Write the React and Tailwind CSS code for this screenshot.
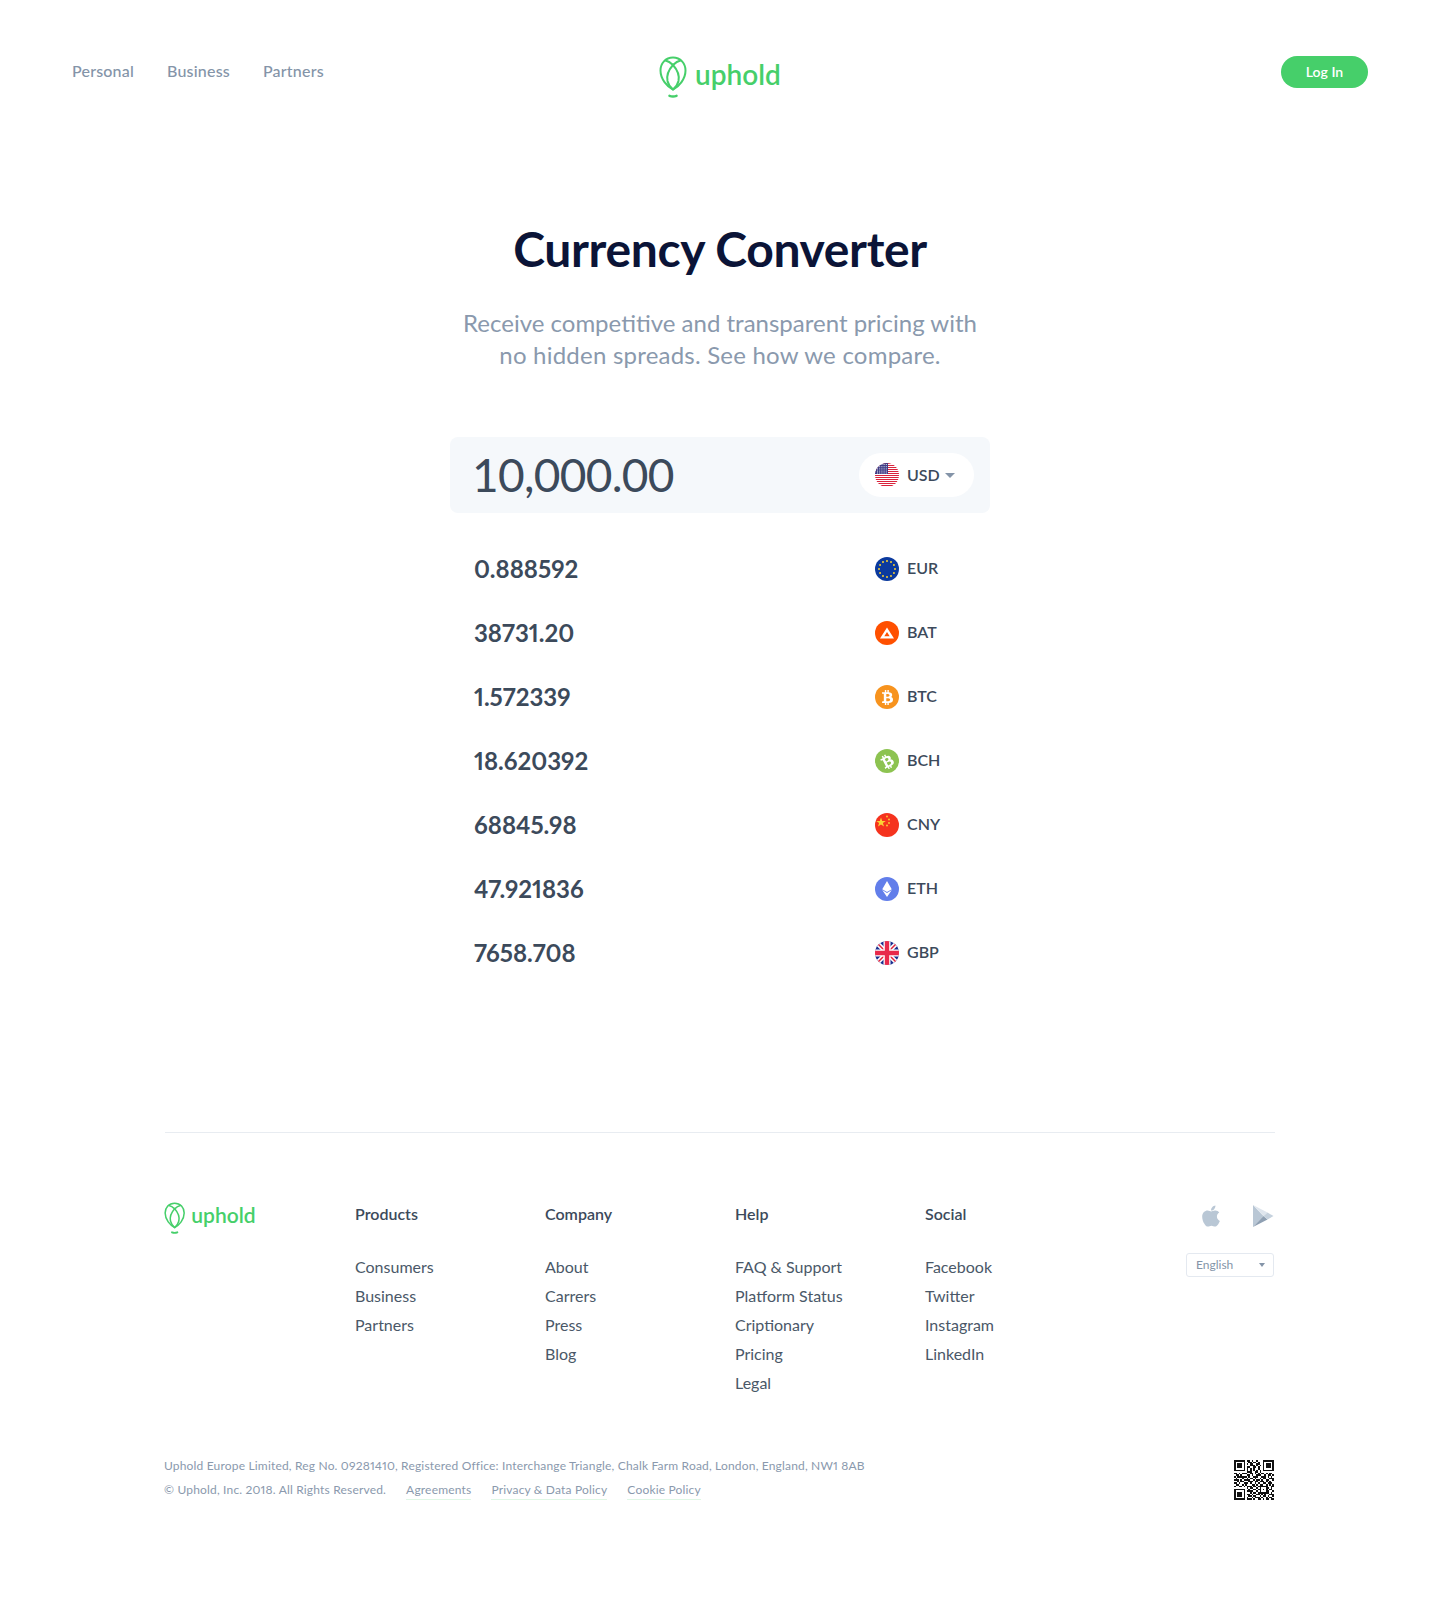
import React from "react";
import { FaApple, FaBtc, FaEthereum } from "react-icons/fa";

const Logo = ({ h, textClass }) => (
  <div className="flex items-center">
    <svg viewBox="0 0 28 42" style={{ height: h, width: (h * 28) / 42 }} fill="none" stroke="#46cf6a" strokeWidth="2" strokeLinecap="round">
      <path d="M14 1.5C6.5 1.5 1.5 7.5 1.5 14.5C1.5 23 8 30.5 14 33.5C20 30.5 26.5 23 26.5 14.5C26.5 7.5 21.5 1.5 14 1.5Z" />
      <path d="M14 9C9.5 14 7.5 20 8.5 25C9.5 29 12 32 14 33.5C16 32 18.5 29 19.5 25C20.5 20 18.5 14 14 9Z" />
      <path d="M6.5 4.5C9 5 12 7 14 9C16 7 19 5 21.5 4.5" />
      <path d="M10.5 39.8C12.5 40.6 15.5 40.6 17.5 39.8" strokeWidth="2.4" />
    </svg>
    <span className={"font-semibold text-[#46cf6a] " + textClass}>uphold</span>
  </div>
);

const Disc = ({ id, children }) => (
  <svg viewBox="0 0 24 24" className="w-6 h-6 shrink-0">
    <defs>
      <clipPath id={id}>
        <circle cx="12" cy="12" r="12" />
      </clipPath>
    </defs>
    <g clipPath={`url(#${id})`}>{children}</g>
  </svg>
);

const Us = () => (
  <Disc id="us">
    <rect width="24" height="24" fill="#fff" />
    {[0, 2, 4, 6, 8, 10, 12, 14, 16, 18, 20, 22].map((y) => (
      <rect key={y} y={y} width="24" height="1" shapeRendering="crispEdges" fill="#d9233c" />
    ))}
    <rect width="12.5" height="11" shapeRendering="crispEdges" fill="#3f3d86" />
    {[1.5, 3.7, 5.9, 8.1, 10].map((y, r) =>
      [2.5, 4.7, 6.9, 9.1, 11.3].map((x) => <rect key={x + "-" + r} x={x - 0.5} y={y - 0.5} width="1" height="1" fill="#e8e8f2" />)
    )}
  </Disc>
);

const Eur = () => (
  <Disc id="eur">
    <rect width="24" height="24" fill="#0b3a9e" />
    {Array.from({ length: 12 }).map((_, i) => {
      const a = (i * Math.PI) / 6;
      return <circle key={i} cx={12 + 8 * Math.cos(a)} cy={12 + 8 * Math.sin(a)} r="1" fill="#f6cf2f" />;
    })}
  </Disc>
);

const Bat = () => (
  <Disc id="bat">
    <rect width="24" height="24" fill="#ff5000" />
    <path fillRule="evenodd" d="M12 6.5L19 17.5H5L12 6.5ZM12 11L9.3 15.2H14.7L12 11Z" fill="#fff" />
  </Disc>
);

const Btc = () => (
  <div className="w-6 h-6 rounded-full bg-[#f7931e] flex items-center justify-center shrink-0">
    <FaBtc className="text-white w-[15px] h-[15px]" />
  </div>
);

const Bch = () => (
  <div className="w-6 h-6 rounded-full bg-[#8dc351] flex items-center justify-center shrink-0">
    <FaBtc className="text-white w-[15px] h-[15px] -rotate-[28deg]" />
  </div>
);

const Cny = () => (
  <Disc id="cny">
    <rect width="24" height="24" fill="#f5331e" />
    <path d="M6 4.5L7.2 8H10.8L7.9 10.1L9 13.6L6 11.5L3 13.6L4.1 10.1L1.2 8H4.8Z" fill="#fbd335" />
    {[[12, 3.5], [14, 6.5], [14, 10], [12, 12.5]].map(([x, y]) => (
      <circle key={y} cx={x} cy={y} r="0.9" fill="#fbd335" />
    ))}
  </Disc>
);

const Eth = () => (
  <div className="w-6 h-6 rounded-full bg-[#627eea] flex items-center justify-center shrink-0">
    <FaEthereum className="text-white w-[16px] h-[16px]" />
  </div>
);

const Gbp = () => (
  <Disc id="gbp">
    <rect width="24" height="24" fill="#1b2f8f" />
    <path d="M0 0L24 24M24 0L0 24" stroke="#fff" strokeWidth="4.5" />
    <path d="M0 0L24 24M24 0L0 24" stroke="#e0243c" strokeWidth="1.5" />
    <path d="M12 0V24M0 12H24" stroke="#fff" strokeWidth="7" />
    <path d="M12 0V24M0 12H24" stroke="#e8294a" strokeWidth="4.4" />
  </Disc>
);

const rates = [
  ["0.888592", "EUR", Eur],
  ["38731.20", "BAT", Bat],
  ["1.572339", "BTC", Btc],
  ["18.620392", "BCH", Bch],
  ["68845.98", "CNY", Cny],
  ["47.921836", "ETH", Eth],
  ["7658.708", "GBP", Gbp],
];

const columns = [
  ["Products", ["Consumers", "Business", "Partners"]],
  ["Company", ["About", "Carrers", "Press", "Blog"]],
  ["Help", ["FAQ & Support", "Platform Status", "Criptionary", "Pricing", "Legal"]],
  ["Social", ["Facebook", "Twitter", "Instagram", "LinkedIn"]],
];

const qrRows = [
  "1111111011010010001111111",
  "1000001001101101001000001",
  "1011101010110011001011101",
  "1011101000111010101011101",
  "1011101011001101001011101",
  "1000001010101001001000001",
  "1111111010101010101111111",
  "0000000011100110100000000",
  "1101011100110101011010110",
  "0110100011010011100101101",
  "1011111101001110011101010",
  "0100010010110100101100111",
  "1110101111001011010011001",
  "0010110001110110111010100",
  "1101001110100101001101110",
  "0110010100011010110010101",
  "1001101011101101111110011",
  "0000000010110010100011010",
  "1111111001001101101010110",
  "1000001011110010100011001",
  "1011101000101101111111010",
  "1011101011010011010100111",
  "1011101001101100101101001",
  "1000001010010111010010110",
  "1111111011101001101011011",
];

const Qr = () => (
  <svg viewBox="0 0 25 25" className="w-10 h-10 mt-[6px] mr-[1px]" shapeRendering="crispEdges">
    {qrRows.map((row, y) =>
      row.split("").map((c, x) => (c === "1" ? <rect key={x + "-" + y} x={x} y={y} width="1" height="1" fill="#111" /> : null))
    )}
  </svg>
);

const Play = () => (
  <svg viewBox="0 0 22 24" className="w-[22px] h-6">
    <polygon points="1,1 1,23 11.5,12" fill="#b9c7d5" />
    <polygon points="1,1 15.5,8.5 11.5,12" fill="#dfe6ee" />
    <polygon points="1,23 15.5,15.5 11.5,12" fill="#8fa0b3" />
    <polygon points="15.5,8.5 21.5,12 15.5,15.5 11.5,12" fill="#c6d2de" />
  </svg>
);

export default function App() {
  return (
    <div className="font-['Lato',sans-serif] [font-variant-numeric:proportional-nums] bg-white min-h-[1600px] flex flex-col items-center">
      <header className="w-full px-[72px] pt-[56px] grid grid-cols-3 items-start">
        <nav className="flex gap-[33px] h-8 items-center -mt-[1px] text-[16px] tracking-[0.2px] font-medium text-[#8494a8]">
          <span>Personal</span>
          <span>Business</span>
          <span>Partners</span>
        </nav>
        <div className="flex justify-center">
          <Logo h={42} textClass="text-[28px] leading-[36px] ml-2 -mt-[7px]" />
        </div>
        <div className="flex justify-end">
          <span className="w-[87px] h-8 rounded-full bg-[#46cf6a] text-white text-[14px] font-semibold pb-[1px] flex items-center justify-center">Log In</span>
        </div>
      </header>

      <h1 className="mt-[123px] text-[48px] leading-[56px] font-bold tracking-[-0.35px] text-[#0b1437]">Currency Converter</h1>
      <p className="mt-[30px] text-[24px] leading-[32px] text-[#8a99ad] text-center">
        Receive competitive and transparent pricing with
        <br />
        <span className="tracking-[0.22px]">no hidden spreads. See how we compare.</span>
      </p>

      <div className="mt-[66px] w-[540px] h-[76px] rounded-lg bg-[#f5f8fb] pl-[22px] pr-[16px] flex items-center justify-between">
        <span className="text-[46px] font-normal text-[#3c4a5b] tabular-nums tracking-[-0.7px] -mt-[1px]">10,000.00</span>
        <div className="w-[115px] h-[44px] rounded-full bg-white pl-4 flex items-center gap-2">
          <Us />
          <span className="text-[16px] font-semibold text-[#3c4a5b]">USD</span>
          <span className="-ml-[3px] w-0 h-0 border-x-[5px] border-x-transparent border-t-[5px] border-t-[#8494a8]" />
        </div>
      </div>

      <div className="mt-[24px] w-[540px] flex flex-col">
        {rates.map(([v, c, Icon]) => (
          <div key={c} className="h-[64px] pl-6 flex items-center justify-between">
            <span className="text-[24px] font-bold text-[#3c4a5b]">{v}</span>
            <div className="w-[115px] mr-4 pl-4 flex items-center gap-2">
              <Icon />
              <span className="text-[16px] font-semibold text-[#3c4a5b] -mt-[2px]">{c}</span>
            </div>
          </div>
        ))}
      </div>

      <footer className="mt-[147px] w-[1110px] border-t border-[#e8ecf1] pt-[69px]">
        <div className="flex items-start">
          <div className="w-[190px] -ml-[1px] mr-[1px]">
            <Logo h={32} textClass="text-[21px] leading-[26px] ml-[6px] -mt-[6px]" />
          </div>
          {columns.map(([title, links]) => (
            <div key={title} className="w-[190px]">
              <div className="text-[16px] leading-[24px] font-semibold text-[#3c4a5b]">{title}</div>
              <ul className="mt-[26px] flex flex-col text-[16px] leading-[29px] text-[#4a5868]">
                {links.map((l) => (
                  <li key={l}>{l}</li>
                ))}
              </ul>
            </div>
          ))}
          <div className="ml-auto flex flex-col items-end mr-[1px] pt-[2px]">
            <div className="flex items-center gap-[29px]">
              <FaApple className="w-6 h-6 text-[#b9c7d5]" />
              <Play />
            </div>
            <div className="mt-[25px] w-[88px] h-6 rounded-[3px] border border-[#e4e9f0] pl-[9px] pr-2 flex items-center justify-between text-[12px] text-[#8494a8]">
              <span>English</span>
              <span className="w-0 h-0 border-x-[3.5px] border-x-transparent border-t-[4px] border-t-[#8494a8]" />
            </div>
          </div>
        </div>

        <div className="mt-[57px] flex items-start justify-between">
          <div className="-ml-[1px] text-[12px] leading-[24px] text-[#8a99ad] tracking-[0.18px]">
            <div>Uphold Europe Limited, Reg No. 09281410, Registered Office: Interchange Triangle, Chalk Farm Road, London, England, NW1 8AB</div>
            <div className="flex gap-5">
              <span>© Uphold, Inc. 2018. All Rights Reserved.</span>
              <span className="leading-[18px] mt-[3px] h-[19px] border-b border-[#dff7e5]">Agreements</span>
              <span className="leading-[18px] mt-[3px] h-[19px] border-b border-[#dff7e5]">Privacy &amp; Data Policy</span>
              <span className="leading-[18px] mt-[3px] h-[19px] border-b border-[#dff7e5]">Cookie Policy</span>
            </div>
          </div>
          <Qr />
        </div>
      </footer>
    </div>
  );
}
